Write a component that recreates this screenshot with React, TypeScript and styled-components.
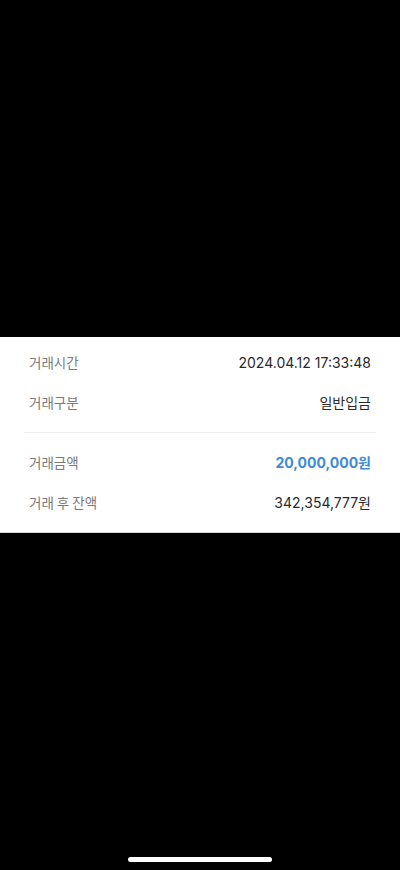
import React from "react";
import styled, { createGlobalStyle } from "styled-components";

const GlobalStyle = createGlobalStyle`
  html, body {
    margin: 0;
    padding: 0;
    background: #000;
  }
  body {
    font-family: "Inter", "Noto Sans CJK KR", sans-serif;
    -webkit-font-smoothing: antialiased;
  }
`;

const Screen = styled.div`
  width: 400px;
  height: 870px;
  background: #000;
  display: flex;
  flex-direction: column;
`;

const TopSpace = styled.div`
  height: 337px;
`;

const Panel = styled.section`
  background: #fff;
  padding: 5px 24px 10px;
  border-bottom: 1px solid #d8d8d8;
`;

const Divider = styled.hr`
  border: none;
  height: 1px;
  background: #f0f0f0;
  margin: 10px 0 9px;
`;

const Row = styled.div`
  height: 40px;
  padding: 0 5px;
  display: flex;
  align-items: center;
  justify-content: space-between;
`;

const Label = styled.span`
  font-family: "Noto Sans CJK KR", sans-serif;
  font-size: 13.5px;
  color: #7a7a7a;
`;

const Value = styled.span<{ highlight?: boolean }>`
  font-family: "Inter", "Noto Sans CJK KR", sans-serif;
  font-size: 14px;
  font-weight: ${(props) => (props.highlight ? 700 : 400)};
  color: ${(props) => (props.highlight ? "#3e8ad6" : "#2a2a2a")};
`;

const Filler = styled.div`
  flex: 1;
  display: flex;
  align-items: flex-end;
  justify-content: center;
  padding-bottom: 8px;
`;

const HomeIndicator = styled.div`
  width: 144px;
  height: 5px;
  border-radius: 3px;
  background: #fff;
`;

const details = [
  { label: "거래시간", value: "2024.04.12 17:33:48" },
  { label: "거래구분", value: "일반입금" },
];

const amounts = [
  { label: "거래금액", value: "20,000,000원", highlight: true },
  { label: "거래 후 잔액", value: "342,354,777원" },
];

export default function App() {
  return (
    <Screen>
      <GlobalStyle />
      <TopSpace />
      <Panel>
        {details.map((d) => (
          <Row key={d.label}>
            <Label>{d.label}</Label>
            <Value>{d.value}</Value>
          </Row>
        ))}
        <Divider />
        {amounts.map((a) => (
          <Row key={a.label}>
            <Label>{a.label}</Label>
            <Value highlight={a.highlight}>{a.value}</Value>
          </Row>
        ))}
      </Panel>
      <Filler>
        <HomeIndicator />
      </Filler>
    </Screen>
  );
}
